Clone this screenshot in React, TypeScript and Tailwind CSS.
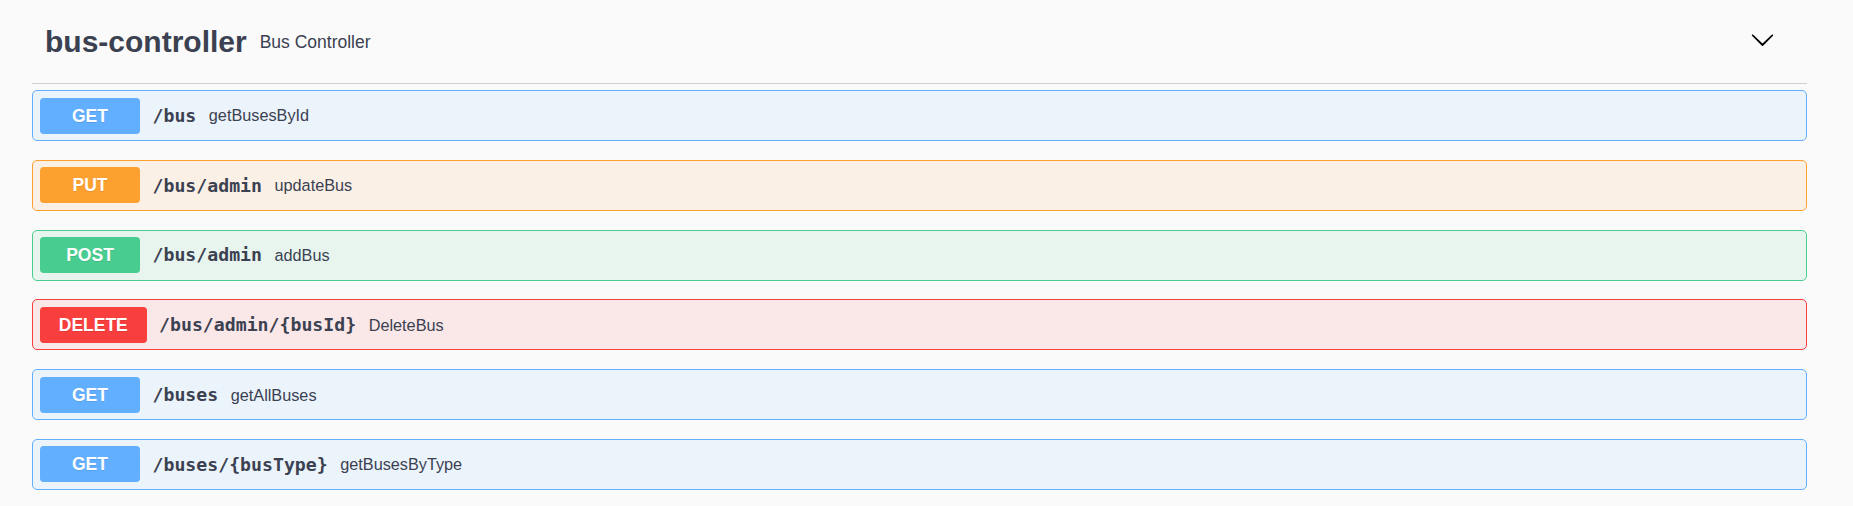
const ops = [
  { method: "GET", path: "/bus", summary: "getBusesById", badge: "bg-[#61affe]", box: "border-[#61affe] bg-[#ebf3fb]" },
  { method: "PUT", path: "/bus/admin", summary: "updateBus", badge: "bg-[#fca130]", box: "border-[#fca130] bg-[#faf0e6]" },
  { method: "POST", path: "/bus/admin", summary: "addBus", badge: "bg-[#49cc90]", box: "border-[#49cc90] bg-[#e8f5ef]" },
  { method: "DELETE", path: "/bus/admin/{busId}", summary: "DeleteBus", badge: "bg-[#f93e3e]", box: "border-[#f93e3e] bg-[#fae7e7]" },
  { method: "GET", path: "/buses", summary: "getAllBuses", badge: "bg-[#61affe]", box: "border-[#61affe] bg-[#ebf3fb]" },
  { method: "GET", path: "/buses/{busType}", summary: "getBusesByType", badge: "bg-[#61affe]", box: "border-[#61affe] bg-[#ebf3fb]" },
]

function Chevron() {
  return (
    <svg width="25" height="25" viewBox="0 0 20 20" className="fill-[#000]">
      <path d="M17.418 6.109c.272-.268.709-.268.979 0s.271.701 0 .969l-7.908 7.83c-.27.268-.707.268-.979 0l-7.908-7.83c-.27-.268-.27-.701 0-.969.271-.268.709-.268.979 0L10 13.25l7.418-7.141z" />
    </svg>
  )
}

export default function App() {
  return (
    <div className="min-h-[506px] w-full bg-[#fafafa] pl-[32px] pr-[46px] font-['Liberation_Sans',Arial,sans-serif] text-[#3b4151]">
      <div className="flex h-[84px] items-center border-b border-[#cfd0d2] pl-[13px] pr-[32px]">
        <h3 className="text-[30px] font-bold leading-normal">bus-controller</h3>
        <span className="ml-[13px] mt-[1px] text-[17.5px]">Bus Controller</span>
        <div className="ml-auto mb-[5px]">
          <Chevron />
        </div>
      </div>
      <div className="flex flex-col gap-[18.8px] pt-[6px]">
        {ops.map((op, i) => (
          <div key={i} className={`flex h-[51px] items-center rounded-[5px] border px-[7px] ${op.box}`}>
            <span className={`min-w-[100px] rounded-[3.75px] px-[18.75px] py-[8px] text-center text-[17.5px] font-bold leading-[20px] text-white [text-shadow:0_1px_0_rgba(0,0,0,0.1)] ${op.badge}`}>
              {op.method}
            </span>
            <span className="px-[12.5px] font-['DejaVu_Sans_Mono',monospace] text-[18.2px] font-bold">
              {op.path}
            </span>
            <span className="text-[16.25px]">{op.summary}</span>
          </div>
        ))}
      </div>
    </div>
  )
}
